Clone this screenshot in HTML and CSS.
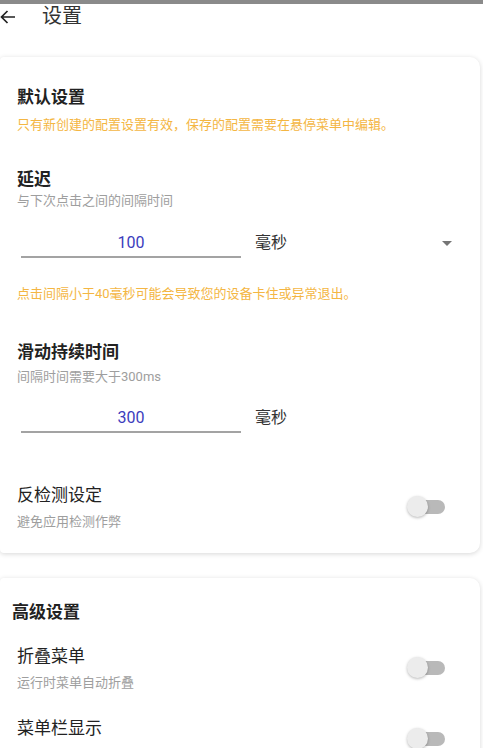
FILE: index.html
```html
<!DOCTYPE html>
<html lang="zh">
<head>
<meta charset="utf-8">
<title>设置</title>
<link rel="stylesheet" href="styles.css">
</head>
<body>
<div class="status-strip"></div>
<header class="appbar">
  <svg class="back" width="16" height="14" viewBox="0 0 16 14"><path d="M15 7H1.5M7.5 1L1.5 7L7.5 13" fill="none" stroke="#222" stroke-width="1.7"/></svg>
  <span class="appbar-title">设置</span>
</header>

<section class="card card-default">
  <h2 class="card-title">默认设置</h2>
  <p class="note note-top">只有新创建的配置设置有效，保存的配置需要在悬停菜单中编辑。</p>

  <h3 class="item-title bold gap-delay">延迟</h3>
  <p class="item-sub sub-tight">与下次点击之间的间隔时间</p>
  <div class="input-row row-delay">
    <div class="field">100</div>
    <span class="unit">毫秒</span>
    <span class="caret"></span>
  </div>
  <p class="note note-warn">点击间隔小于40毫秒可能会导致您的设备卡住或异常退出。</p>

  <h3 class="item-title bold gap-swipe">滑动持续时间</h3>
  <p class="item-sub sub-swipe">间隔时间需要大于300ms</p>
  <div class="input-row row-swipe">
    <div class="field">300</div>
    <span class="unit">毫秒</span>
  </div>

  <div class="switch-row row-anti">
    <div class="switch-text">
      <div class="item-title">反检测设定</div>
      <div class="item-sub sub-switch">避免应用检测作弊</div>
    </div>
    <span class="toggle"><span class="thumb"></span></span>
  </div>
</section>

<section class="card card-adv">
  <h2 class="card-title adv-title">高级设置</h2>
  <div class="switch-row row-fold">
    <div class="switch-text">
      <div class="item-title">折叠菜单</div>
      <div class="item-sub sub-switch">运行时菜单自动折叠</div>
    </div>
    <span class="toggle"><span class="thumb"></span></span>
  </div>
  <div class="switch-row row-bar">
    <div class="switch-text">
      <div class="item-title">菜单栏显示</div>
    </div>
    <span class="toggle toggle-low"><span class="thumb"></span></span>
  </div>
</section>
</body>
</html>
```

FILE: styles.css
```css
html, body {
  margin: 0;
  padding: 0;
  background: #ffffff;
  font-family: Roboto, "Noto Sans CJK SC", "Noto Sans", sans-serif;
  color: #222;
  overflow: hidden;
}

.status-strip {
  height: 4px;
  background: #8a8a8a;
}

.appbar {
  display: flex;
  align-items: center;
  height: 24px;
}

.back {
  display: block;
  margin-left: 0;
  margin-top: 1px;
}

.appbar-title {
  margin-left: 26px;
  font-size: 20px;
  line-height: 24px;
  color: #333;
}

.card {
  width: 480px;
  background: #fff;
  box-shadow: 0 1px 5px rgba(0, 0, 0, 0.16);
  box-sizing: border-box;
  padding-left: 17px;
  border-radius: 4px 10px 10px 4px;
}

.card-default {
  margin-top: 29px;
  padding-top: 28px;
  padding-bottom: 22px;
}

.card-adv {
  margin-top: 25px;
  padding-top: 22px;
  padding-bottom: 30px;
}

h2, h3, p {
  margin: 0;
  font-weight: normal;
}

.card-title {
  font-size: 17px;
  line-height: 24px;
  font-weight: 700;
  color: #222;
}

.adv-title {
  margin-left: -5px;
}

.note {
  font-size: 13px;
  line-height: 18px;
  color: #f4b643;
}

.note-top { margin-top: 7px; }
.note-warn { margin-top: 27px; }

.item-title {
  font-size: 17px;
  line-height: 24px;
  color: #222;
}

.bold { font-weight: 700; }

.gap-delay { margin-top: 33px; }
.gap-swipe { margin-top: 37px; }

.item-sub {
  font-size: 13px;
  line-height: 18px;
  color: #9e9e9e;
}

.sub-tight { margin-top: 1px; }
.sub-swipe { margin-top: 4px; }
.sub-switch { margin-top: 6px; }

.input-row {
  display: flex;
  align-items: flex-start;
}

.row-delay { margin-top: 23px; }
.row-swipe { margin-top: 22px; }

.field {
  width: 220px;
  margin-left: 4px;
  text-align: center;
  font-size: 16px;
  line-height: 20px;
  padding-bottom: 3px;
  border-bottom: 2px solid #a3a3a3;
  color: #3c3cbd;
}

.unit {
  margin-left: 14px;
  font-size: 16px;
  line-height: 20px;
  color: #333;
}

.caret {
  margin-left: auto;
  margin-right: 28px;
  margin-top: 8px;
  width: 0;
  height: 0;
  border-left: 5px solid transparent;
  border-right: 5px solid transparent;
  border-top: 5px solid #757575;
}

.switch-row {
  display: flex;
  align-items: center;
  justify-content: space-between;
  padding-right: 35px;
}

.row-anti { margin-top: 50px; }
.row-fold { margin-top: 20px; }
.row-bar {
  margin-top: 24px;
  align-items: flex-start;
}

.toggle {
  position: relative;
  width: 31px;
  height: 14px;
  border-radius: 7px;
  background: #b9b9b9;
}

.toggle-low {
  margin-top: 16px;
}

.thumb {
  position: absolute;
  left: -7px;
  top: -4px;
  width: 21px;
  height: 21px;
  border-radius: 50%;
  background: #ececec;
  box-shadow: 0 1px 3px rgba(0, 0, 0, 0.28);
}
```
